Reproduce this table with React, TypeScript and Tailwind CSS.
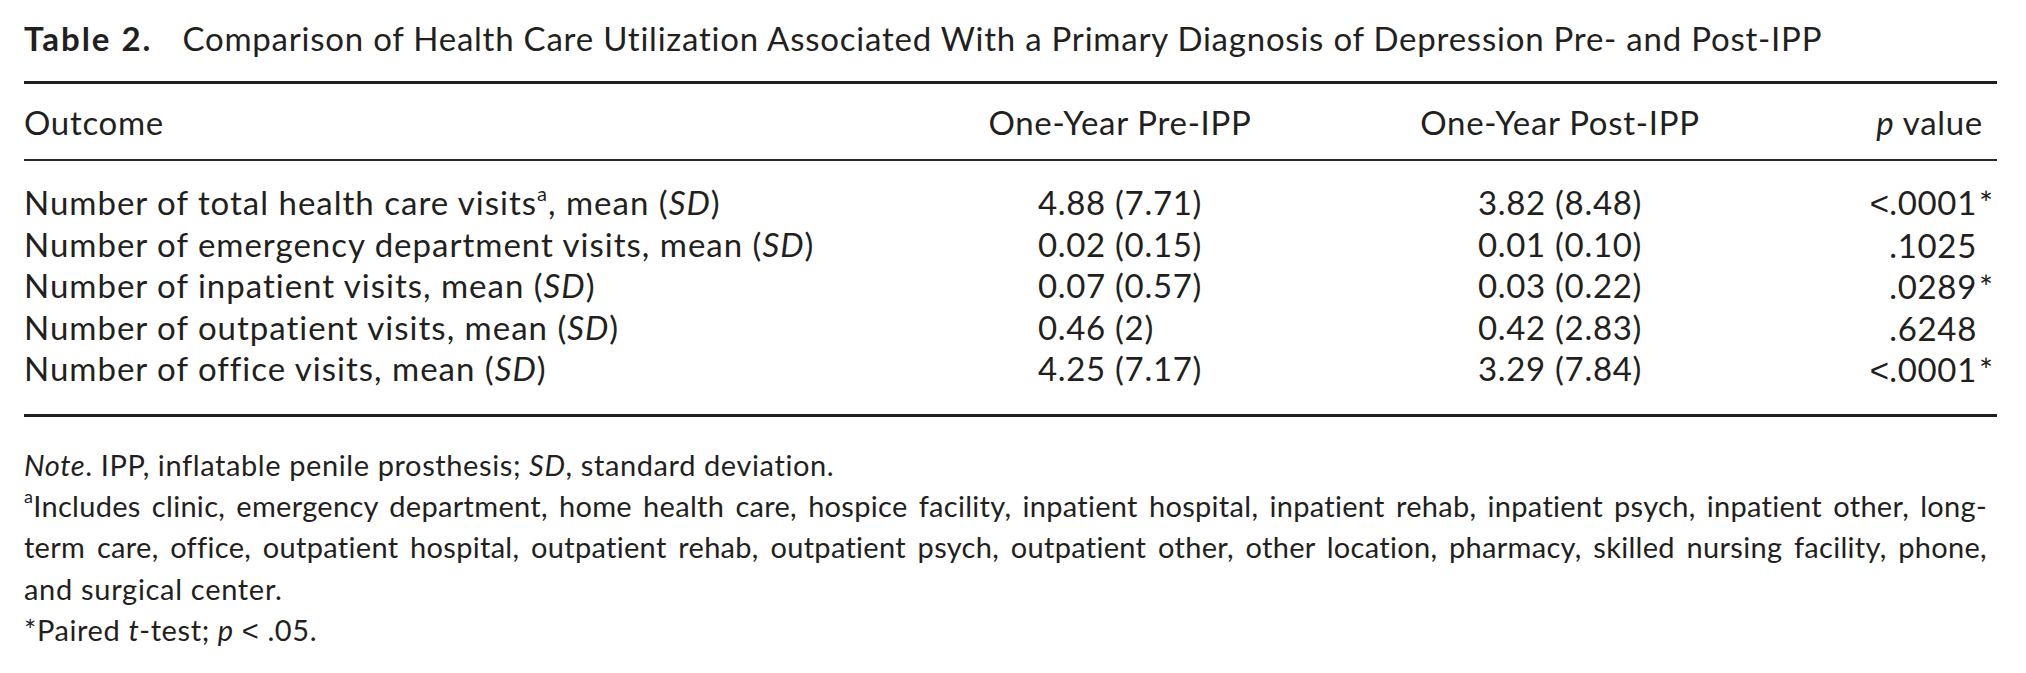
const rows = [
  { label: "total health care visits", sup: true, pre: "4.88 (7.71)", post: "3.82 (8.48)", p: ".0001", lt: true, star: true },
  { label: "emergency department visits", sup: false, pre: "0.02 (0.15)", post: "0.01 (0.10)", p: ".1025", lt: false, star: false },
  { label: "inpatient visits", sup: false, pre: "0.07 (0.57)", post: "0.03 (0.22)", p: ".0289", lt: false, star: true },
  { label: "outpatient visits", sup: false, pre: "0.46 (2)", post: "0.42 (2.83)", p: ".6248", lt: false, star: false },
  { label: "office visits", sup: false, pre: "4.25 (7.17)", post: "3.29 (7.84)", p: ".0001", lt: true, star: true },
]

export default function App() {
  return (
    <div className="min-h-screen bg-white pl-[24px] pr-[29px] pt-[18px] font-[Lato,sans-serif] text-[#231f20]">
      {/* Caption */}
      <div className="whitespace-nowrap text-[33px] leading-[41.6px] tracking-[0.77px]">
        <span className="font-bold tracking-[2px]">Table 2.</span>
        <span className="ml-[30px]">
          Comparison of Health Care Utilization Associated With a Primary Diagnosis of Depression Pre- and Post-IPP
        </span>
      </div>

      <div className="mt-[21px] h-[3px] bg-[#231f20]" />

      {/* Header */}
      <div className="grid grid-cols-[896px_400px_480px_1fr] pt-[18px] pb-[16px] text-[33px] leading-[41.6px] tracking-[0.7px]">
        <div>Outcome</div>
        <div className="text-center">One-Year Pre-IPP</div>
        <div className="text-center">One-Year Post-IPP</div>
        <div className="pr-[14px] text-right">
          <i>p</i> value
        </div>
      </div>

      <div className="h-[2px] bg-[#2a2a2a]" />

      {/* Body */}
      <div className="grid grid-cols-[896px_400px_480px_1fr] pt-[21px] pb-[22px] text-[33px] leading-[41.5px] tracking-[0.7px]">
        <div className="whitespace-nowrap tracking-[1px]">
          {rows.map((r) => (
            <div key={r.label}>
              Number of {r.label}
              {r.sup && <sup className="text-[20px] -top-[0.7em]">a</sup>}, mean (<i>SD</i>)
            </div>
          ))}
        </div>
        <div className="flex flex-col items-center">
          <div className="w-fit whitespace-nowrap">
            {rows.map((r) => (
              <div key={r.label}>{r.pre}</div>
            ))}
          </div>
        </div>
        <div className="flex flex-col items-center">
          <div className="w-fit whitespace-nowrap">
            {rows.map((r) => (
              <div key={r.label}>{r.post}</div>
            ))}
          </div>
        </div>
        <div className="flex flex-col items-end">
          {rows.map((r) => (
            <div key={r.label} className="flex whitespace-nowrap">
              <span>
                {r.lt && <span className="font-['Liberation_Sans'] tracking-[0px]">&lt;</span>}
                {r.p}
              </span>
              <span className="w-[20px] pl-[2px]">{r.star ? "*" : ""}</span>
            </div>
          ))}
        </div>
      </div>

      <div className="h-[3px] bg-[#231f20]" />

      {/* Notes */}
      <div className="pt-[27px] pr-[10px] text-[29px] leading-[41.3px] tracking-[0.3px]">
        <div className="tracking-[0.6px]">
          <i>Note</i>. IPP, inflatable penile prosthesis; <i>SD</i>, standard deviation.
        </div>
        <div className="text-justify [text-align-last:justify]">
          <sup className="text-[18px] -top-[0.75em]">a</sup>Includes clinic, emergency department, home health care, hospice facility, inpatient hospital, inpatient rehab, inpatient psych, inpatient other, long-
        </div>
        <div className="text-justify [text-align-last:justify]">
          term care, office, outpatient hospital, outpatient rehab, outpatient psych, outpatient other, other location, pharmacy, skilled nursing facility, phone,
        </div>
        <div className="tracking-[0.7px]">and surgical center.</div>
        <div className="tracking-[0.6px]">
          *Paired <i>t</i>-test; <i>p</i> <span className="font-['Liberation_Sans']">&lt;</span> .05.
        </div>
      </div>
    </div>
  )
}
